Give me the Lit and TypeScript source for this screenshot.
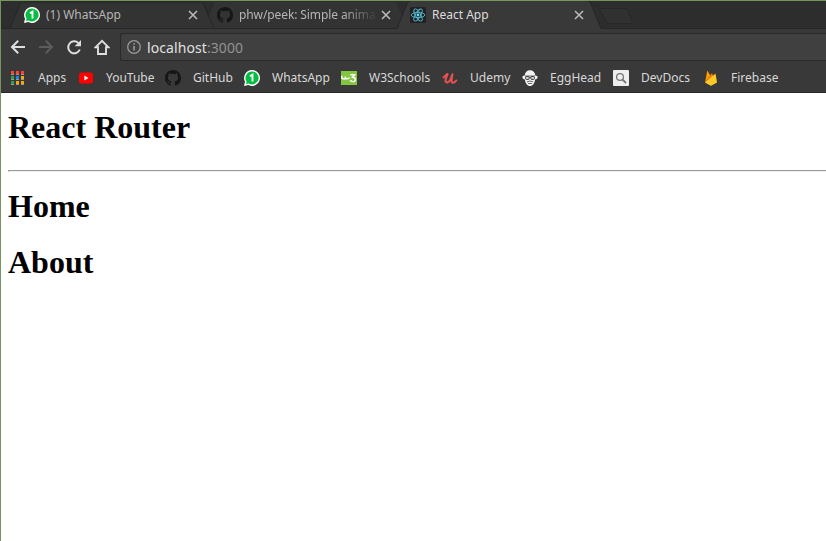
import { LitElement, html, svg, css } from "lit";
import { customElement } from "lit/decorators.js";

const chat = svg`<path d="M8 0a8 8 0 1 1-3.700 15.100L0 16l1-4.200A8 8 0 0 1 8 0z" fill="#fff"/><path d="M8 1.500a6.500 6.500 0 1 1-3.400 12L2 14.100l.6-2.500A6.500 6.500 0 0 1 8 1.500z" fill="#07bc42"/><path d="M5.900 6.200 8.500 4.600V11.400" fill="none" stroke="#fff" stroke-width="1.900"/>`;
const octocat = svg`<path fill="#161616" d="M8 0C3.580 0 0 3.580 0 8c0 3.540 2.290 6.530 5.470 7.590.4.070.55-.17.55-.38 0-.19-.01-.82-.01-1.490-2.010.37-2.530-.49-2.690-.94-.09-.23-.48-.94-.82-1.130-.28-.15-.68-.52-.01-.53.63-.01 1.080.58 1.230.82.72 1.210 1.870.87 2.330.66.07-.52.28-.87.51-1.070-1.780-.2-3.640-.89-3.640-3.950 0-.87.31-1.590.82-2.150-.08-.2-.36-1.020.08-2.120 0 0 .67-.21 2.200.82a7.600 7.600 0 0 1 4 0c1.530-1.040 2.200-.82 2.200-.82.44 1.100.16 1.920.08 2.120.51.56.82 1.270.82 2.150 0 3.070-1.870 3.750-3.650 3.950.29.25.54.73.54 1.480 0 1.070-.01 1.930-.01 2.200 0 .21.15.46.55.38A8.010 8.010 0 0 0 16 8c0-4.420-3.580-8-8-8z"/>`;

const icons: Record<string, unknown> = {
  chat,
  octocat,
  react: svg`<rect width="16" height="16" rx="1.500" fill="#222"/><g fill="none" stroke="#53b9d3" stroke-width=".9"><ellipse cx="8" cy="8" rx="6.800" ry="2.600"/><ellipse cx="8" cy="8" rx="6.800" ry="2.600" transform="rotate(60 8 8)"/><ellipse cx="8" cy="8" rx="6.800" ry="2.600" transform="rotate(120 8 8)"/></g><circle cx="8" cy="8" r="1.400" fill="#61dafb"/>`,
  apps: svg`${["#ff4131", "#ff4131", "#ff4131", "#2ba24c", "#1a82f7", "#fba700", "#2ba24c", "#fba700", "#fba700"].map(
    (c, i) => svg`<rect x=${1 + (i % 3) * 5} y=${1 + Math.floor(i / 3) * 5} width="3" height="3" fill=${c}/><rect x=${1 + (i % 3) * 5} y=${4 + Math.floor(i / 3) * 5} width="3" height="1" fill="#999"/>`
  )}`,
  youtube: svg`<rect x="1" y="2.500" width="14" height="11" rx="2.200" fill="#f00"/><path d="M6.400 5.500v5l4-2.500z" fill="#fff"/>`,
  w3: svg`<rect y="1" width="16" height="14" fill="#83c441"/><path d="M.8 5.800v1.600q0 1.500 1.800 1.500t1.800-1.500V6.500v.9q0 1.500 1.800 1.500T8.500 7.400M9.300 4.700h4.400L11.500 7.200q2.800 0 2.800 2.200 0 2.200-2.400 2.200-2.200 0-2.600-1.600" fill="none" stroke="#fff" stroke-width="1.400"/>`,
  udemy: svg`<path d="M1.500 7.500Q4 5 5.200 4C6.500 3.500 3.500 8 3.500 10.500c0 3.500 4 1.800 5.200-1.500L10.500 4.200C10 7 8.500 12.800 11 12.800c1.300 0 2.500-1 3.200-2.300" fill="none" stroke="#ea5252" stroke-width="2" stroke-linecap="round" stroke-linejoin="round"/>`,
  egghead: svg`<path d="M8 .3c3 0 5 2 5.300 5.200 1.700 0 2.600.8 2.300 2-.2 1.300-1.200 2-2.500 2C12.500 13.500 10.800 16 8 16s-4.500-2.500-5.100-6.500C1.600 9.500.6 8.800.4 7.500c-.3-1.200.6-2 2.300-2C3 2.300 5 .3 8 .3z" fill="#f2f2f2"/><path d="M3 6h10M7.300 7.500h1.400M5 11.800Q8 10.300 11 11.800M6 13.500h4" fill="none" stroke="#444" stroke-width=".8"/><rect x="3.500" y="6.500" width="3.800" height="3" rx="1.200" fill="#ccc" stroke="#222" stroke-width=".8"/><rect x="8.700" y="6.500" width="3.800" height="3" rx="1.200" fill="#ccc" stroke="#222" stroke-width=".8"/>`,
  devdocs: svg`<rect y="0" width="16" height="16" rx="1" fill="#eee"/><circle cx="7" cy="7" r="3.400" fill="none" stroke="#777" stroke-width="1.300"/><path d="m9.500 9.500 3.500 3.500" stroke="#777" stroke-width="1.800"/>`,
  firebase: svg`<path d="M2 12.500 4.300.4l3 5.200z" fill="#ffa000"/><path d="m2 12.500 7-9.600 2.300 6z" fill="#f57c00"/><path d="M2 12.500 12.500 3.500 14 12.500 8.700 15.600q-.7.300-1.400 0z" fill="#ffca28"/>`,
  back: svg`<path d="M15 8H2.300M8.200 1.800 2 8l6.200 6.200" fill="none" stroke="#dedede" stroke-width="2"/>`,
  forward: svg`<path d="M1 8h12.700M7.800 1.800 14 8l-6.200 6.200" fill="none" stroke="#5c5c5c" stroke-width="2"/>`,
  reload: svg`<path d="M13.800 10.500A6 6 0 1 1 12.400 4" fill="none" stroke="#dedede" stroke-width="2"/><path d="M15 1v6.300H8.700z" fill="#dedede"/>`,
  home: svg`<path d="M8 1.800 1.700 8.200H4V15h8V8.200h2.300z" fill="none" stroke="#dedede" stroke-width="1.900"/>`,
  info: svg`<circle cx="8" cy="8" r="6.300" fill="none" stroke="#999" stroke-width="1.300"/><path d="M8 7v4.500M8 4.300v1.500" stroke="#999" stroke-width="1.600"/>`,
  close: svg`<path d="m4 4 8 8M12 4l-8 8" stroke="#b9b9b9" stroke-width="1.600"/>`,
};

const icon = (name: string) => html`<svg class="icon" viewBox="0 0 16 16">${icons[name]}</svg>`;

const tabs = [
  { icon: "chat", title: "(1) WhatsApp" },
  { icon: "octocat", title: "phw/peek: Simple anima", fade: true },
  { icon: "react", title: "React App", active: true },
];

const bookmarks: [string, string, number][] = [
  ["apps", "Apps", 68],
  ["youtube", "YouTube", 87],
  ["octocat", "GitHub", 79],
  ["chat", "WhatsApp", 97],
  ["w3", "W3Schools", 101],
  ["udemy", "Udemy", 80],
  ["egghead", "EggHead", 91],
  ["devdocs", "DevDocs", 90],
  ["firebase", "Firebase", 90],
];

@customElement("app-root")
export class AppRoot extends LitElement {
  static styles = css`
    :host { display: flex; flex-direction: column; box-sizing: border-box; width: 100%; height: 100vh; overflow: hidden; background: #fff; border-top: 1px solid #75955e; border-left: 1px solid #75955e; }
    .icon { display: block; flex: none; width: 16px; height: 16px; }
    .chrome { flex: none; font-family: "Noto Sans", sans-serif; font-size: 12px; color: #d8d8d8; background: #393939; white-space: nowrap; }
    .strip { position: relative; height: 28px; background: #2d2d2d; }
    .shapes { position: absolute; left: 0; top: 0; }
    .tabs { position: relative; display: flex; padding-left: 23px; }
    .tab { display: flex; align-items: center; width: 193px; height: 28px; color: #b5b5b5; }
    .tab.active { color: #dcdcdc; }
    .title { width: 136px; margin: 0 3px 1px 6px; line-height: 20px; }
    .fade { letter-spacing: -0.1px; mask-image: linear-gradient(to right, #000 104px, rgb(0 0 0 / 0.12) 134px); }
    .toolbar { display: flex; align-items: center; height: 33px; padding: 3px 0 0 9px; box-sizing: border-box; }
    .nav { display: flex; gap: 12px; width: 110px; }
    .address { flex: 1; display: flex; align-items: center; gap: 5px; height: 28px; box-sizing: border-box; border: 1px solid #292929; border-right: 0; border-radius: 3px 0 0 3px; background: #404040; padding-left: 5px; font-size: 14px; letter-spacing: 0.08px; color: #e0e0e0; }
    .port { color: #929292; }
    .bookmarks { display: flex; align-items: center; height: 31px; box-sizing: border-box; padding: 0 0 0 9px; border-bottom: 1px solid #262626; }
    .bookmark { flex: none; display: flex; align-items: center; gap: 12px; }
    .bookmark .icon { margin-top: 2px; }
    .page { flex: 1; padding-left: 7px; font-family: "Liberation Serif", serif; color: #000; }
    h1 { font-size: 32px; line-height: 37px; margin: 0; }
    .heading { padding-top: 16px; }
    hr { height: 0; margin: 24px 0 16px; border: solid; border-width: 1px 0 1px 1px; border-color: #9a9a9a #eee #eee #9a9a9a; }
    .link + .link { margin-top: 19px; }
  `;

  render() {
    return html`
      <header class="chrome">
        <div class="strip">
          <svg class="shapes" width="825" height="28" viewBox="1 1 825 28">
            <path d="M10 28.500 20 4q1-2 3-2H201q2 0 3 2l10 24.500z" fill="#333" stroke="#262626"/>
            <path d="M204 28.500 213 4q1-2 3-2H394q2 0 3 2l10 24.500z" fill="#333" stroke="none"/>
            <path d="M203 3 214 28.500M208 15 213 4" fill="none" stroke="#262626"/>
            <path d="M0 28.500H397L407 4q1-3 3-3H588q2 0 3 3l10 24.500H826V30H0z" fill="#393939"/>
            <path d="M0 28.500H397L407 4q1-3 3-3M588 1q2 0 3 3l10 24.500H826" fill="none" stroke="#262626"/>
            <path d="M602 8.500H625q2 0 3 2L632 21q1 2.500-1 2.500H609q-2 0-3-2L600 10.500q-1-2 2-2z" fill="#313131" stroke="#272727"/>
          </svg>
          <div class="tabs">
            ${tabs.map((t) => html`<div class="tab ${t.active ? "active" : ""}">${icon(t.icon)}<span class="title ${t.fade ? "fade" : ""}">${t.title}</span>${icon("close")}</div>`)}
          </div>
        </div>
        <div class="toolbar">
          <nav class="nav">${["back", "forward", "reload", "home"].map(icon)}</nav>
          <div class="address">${icon("info")}<span>localhost<span class="port">:3000</span></span></div>
        </div>
        <div class="bookmarks">
          ${bookmarks.map(([name, label, width]) => html`<div class="bookmark" style="width:${width}px">${icon(name)}<span>${label}</span></div>`)}
        </div>
      </header>
      <main class="page">
        <h1 class="heading">React Router</h1>
        <hr />
        <h1 class="link">Home</h1>
        <h1 class="link">About</h1>
      </main>
    `;
  }
}
